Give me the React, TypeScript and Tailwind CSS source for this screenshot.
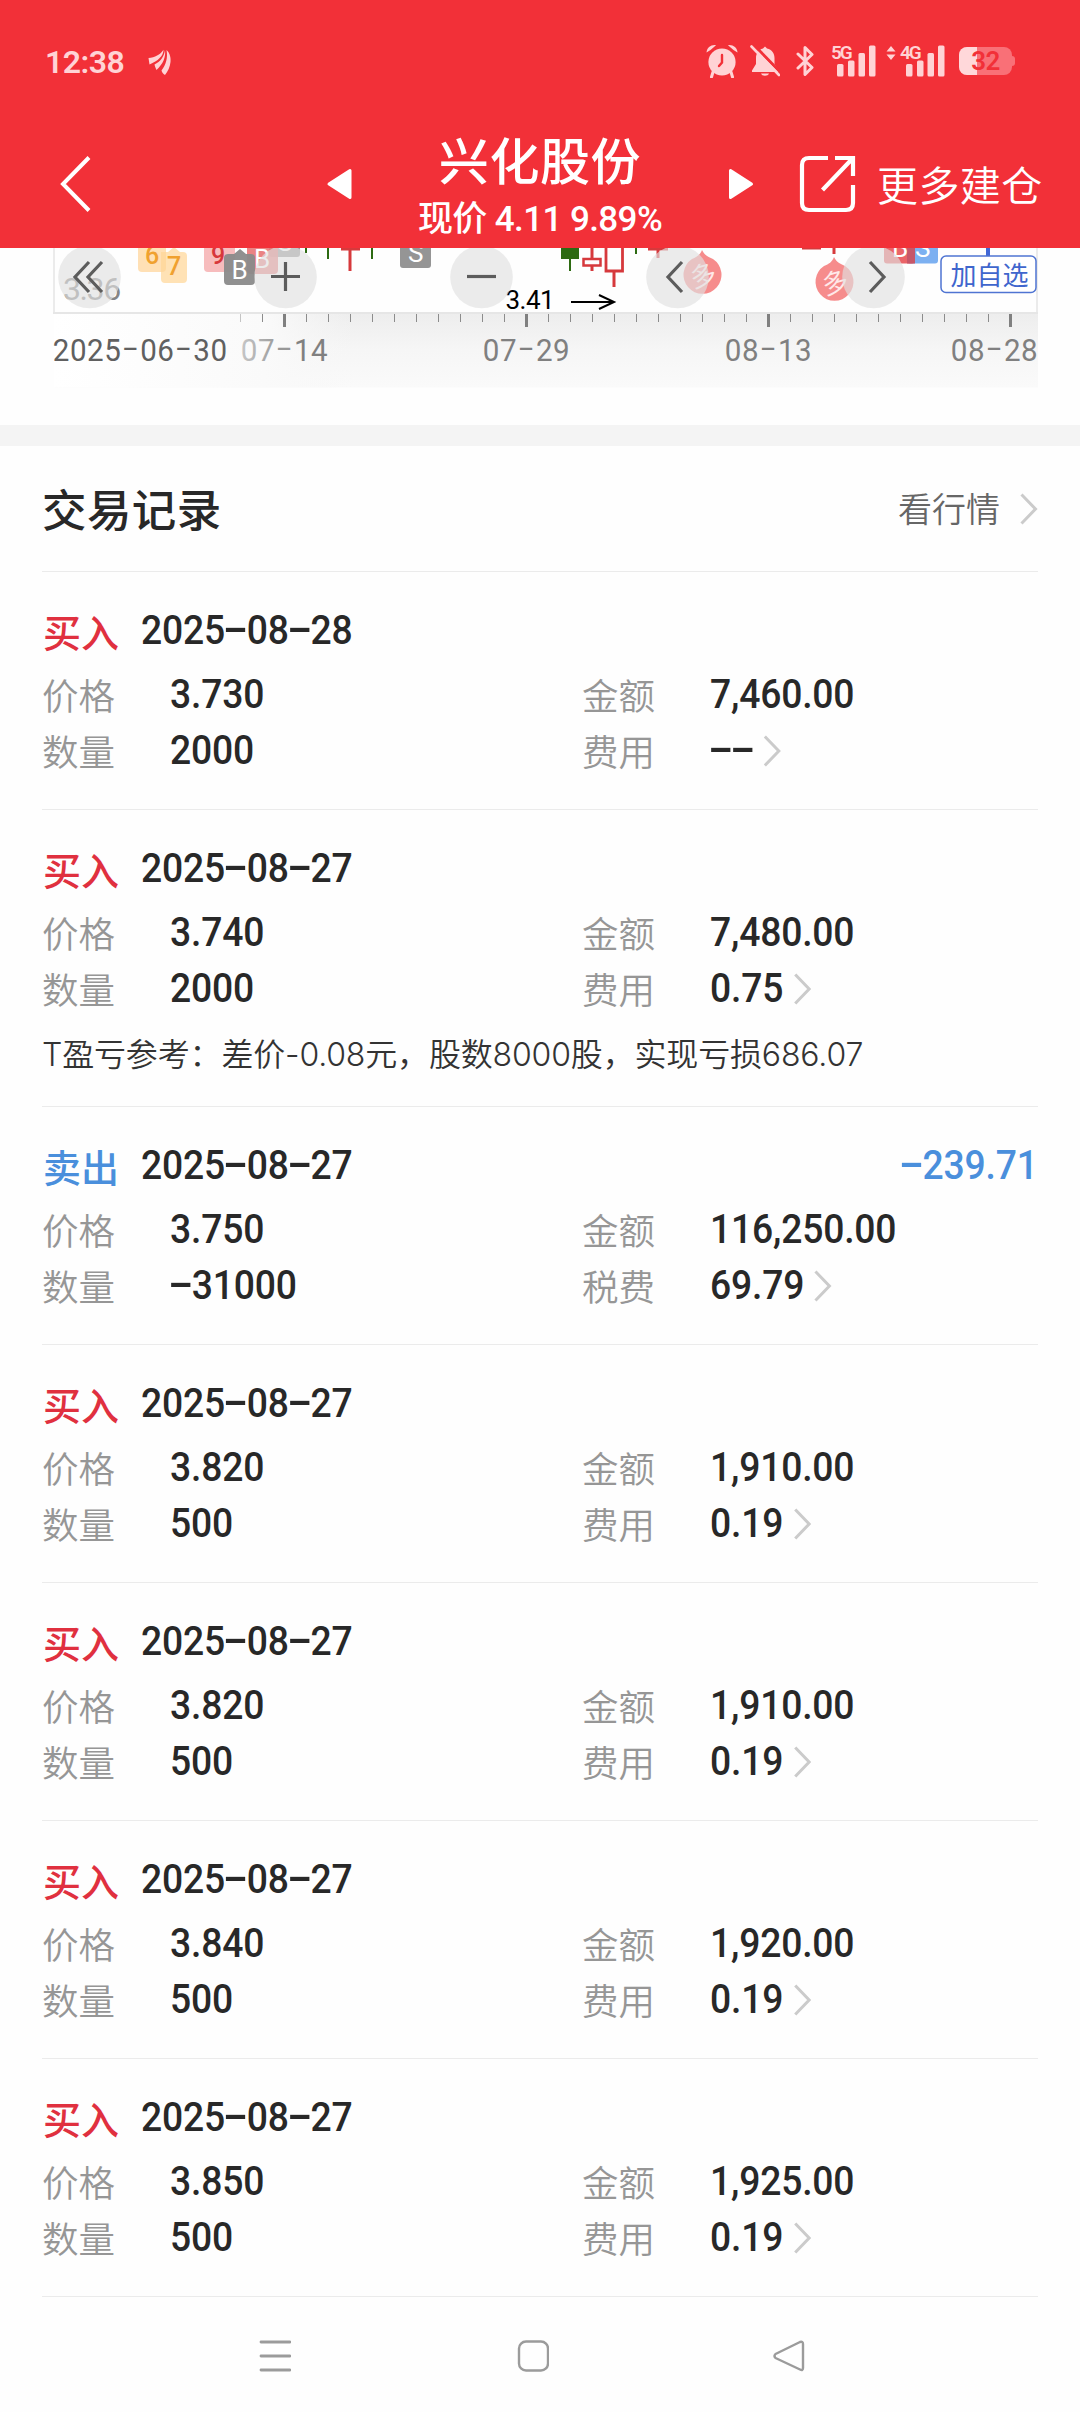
import { Fragment } from 'react';

interface Trade {
  side: 'buy' | 'sell';
  date: string;
  price: string;
  quantity: string;
  amount: string;
  fee: string;
  profit?: string;
  note?: string;
}

const trades: Trade[] = [
  { side: 'buy', date: '2025-08-28', price: '3.730', quantity: '2000', amount: '7,460.00', fee: '--' },
  {
    side: 'buy',
    date: '2025-08-27',
    price: '3.740',
    quantity: '2000',
    amount: '7,480.00',
    fee: '0.75',
    note: 'T盈亏参考：差价-0.08元，股数8000股，实现亏损686.07',
  },
  {
    side: 'sell',
    date: '2025-08-27',
    price: '3.750',
    quantity: '-31000',
    amount: '116,250.00',
    fee: '69.79',
    profit: '-239.71',
  },
  { side: 'buy', date: '2025-08-27', price: '3.820', quantity: '500', amount: '1,910.00', fee: '0.19' },
  { side: 'buy', date: '2025-08-27', price: '3.820', quantity: '500', amount: '1,910.00', fee: '0.19' },
  { side: 'buy', date: '2025-08-27', price: '3.840', quantity: '500', amount: '1,920.00', fee: '0.19' },
  { side: 'buy', date: '2025-08-27', price: '3.850', quantity: '500', amount: '1,925.00', fee: '0.19' },
];

function Chevron({ className }: { className?: string }) {
  return (
    <svg
      viewBox="0 0 18 32"
      preserveAspectRatio="none"
      className={`h-8 shrink-0 ${className ?? ''}`}
      fill="none"
      stroke="#cbcbcb"
      strokeWidth="3"
    >
      <path d="M1.5 1.5 15.5 16 1.5 30.5" />
    </svg>
  );
}

// Condensed digits with a wide, vertically centred dash
function Num({ value, more, right }: { value: string; more?: boolean; right?: boolean }) {
  return (
    <span
      className={`inline-flex scale-x-[0.92] items-center text-[40.5px] leading-[56px] font-medium tracking-[-0.2px] whitespace-nowrap ${right ? 'origin-right' : 'origin-left'}`}
    >
      <span>
        {value.split('').map((c, i) =>
          c === '-' ? (
            <span
              key={i}
              className="inline-block w-[23.6px] origin-center -translate-y-[2px] scale-x-[2] scale-y-[1.1] text-center tracking-normal"
            >
              -
            </span>
          ) : (
            <Fragment key={i}>{c}</Fragment>
          ),
        )}
      </span>
      {more && <Chevron className="mt-0.5 ml-[11px] w-[19.5px]" />}
    </span>
  );
}

function SignalBars() {
  return (
    <svg viewBox="0 0 40 32" className="h-8 w-10" fill="currentColor">
      <rect x="0" y="19" width="6.5" height="12.5" rx="1.5" />
      <rect x="11" y="15.5" width="6.5" height="16" rx="1.5" />
      <rect x="21.5" y="8" width="6.5" height="23.5" rx="1.5" />
      <rect x="32" y="0.5" width="6.5" height="31" rx="1.5" />
    </svg>
  );
}

function StatusBar() {
  return (
    <div className="flex h-[122px] items-center pr-[65px] pl-[45px] text-[#ffd3d5]">
      <span className="w-[103px] pt-px text-[32px] leading-8 font-semibold tracking-[-0.5px]">12:38</span>
      <svg viewBox="0 0 24 26" className="mt-0.5 h-[26px] w-6" fill="currentColor">
        <path d="M0.5 9C7 8.5 12 6 15.5 0.8C15.5 7 10 12 1.5 15.5Z" />
        <path d="M17 1C18 8 15 15 8.5 21C7.5 19 7 17.5 6.5 15.5C12.5 12.5 16 8 17 1Z" />
        <path d="M18.5 1C22 4 23 9 22.5 13C22 18 20 22 17 26C15.5 25.5 14 23.5 13.5 21.5C18 15.5 20 9 18.5 1Z" />
      </svg>

      <div className="ml-auto flex h-8 items-center">
        <svg viewBox="0 0 32 34" className="h-[34px] w-8" fill="currentColor">
          <circle cx="16" cy="18" r="13.6" />
          <path d="M0.5 8.5C1 3.5 5 0.5 10 1.2L4.5 6Z" />
          <path d="M31.5 8.5C31 3.5 27 0.5 22 1.2L27.5 6Z" />
          <path d="M7 28 5.5 33M25 28 26.5 33" stroke="currentColor" strokeWidth="3" strokeLinecap="round" />
          <path d="M16 11V18.5L13 22" fill="none" stroke="#f23038" strokeWidth="2.4" strokeLinecap="round" />
        </svg>
        <svg viewBox="0 0 30 32" className="ml-3 h-8 w-[30px]" fill="currentColor">
          <path d="M15 1.5 17 3.5C22 4.5 24.5 8.5 24.5 13V19L28.5 25.5V27H2V25.5L6 19V13C6 8.5 8.5 4.5 13 3.5Z" />
          <path d="M11 28.5H19C18 31.5 12 31.5 11 28.5Z" />
          <path d="M4 0 32 29" stroke="#f23038" strokeWidth="3" />
          <path d="M1.5 1.5 29 30" stroke="currentColor" strokeWidth="2.6" strokeLinecap="round" />
        </svg>
        <svg
          viewBox="0 0 18 32"
          className="ml-4 h-8 w-[18px]"
          fill="none"
          stroke="currentColor"
          strokeWidth="3"
          strokeLinejoin="round"
          strokeLinecap="round"
        >
          <path d="M2 9 16 22.5 9 29.5V2.5L16 9.5 2 23" />
        </svg>
        <div className="relative ml-[23px] flex">
          <span className="absolute -top-[2px] -left-[6px] text-[19px] leading-5 font-semibold tracking-[-2px]">5G</span>
          <SignalBars />
        </div>
        <svg viewBox="0 0 10 14" className="mb-4 ml-[9px] h-[14px] w-[10px]" fill="currentColor">
          <path d="M5 0 9.5 5.5H0.5ZM5 14 9.5 8.5H0.5Z" />
        </svg>
        <div className="relative ml-[10px] flex">
          <span className="absolute -top-[2px] -left-[6px] text-[19px] leading-5 font-semibold tracking-[-2px]">4G</span>
          <SignalBars />
        </div>
        <div className="relative ml-[13px] flex h-7 w-[53px] items-center justify-center overflow-hidden rounded-[8px] bg-[#f97077]">
          <span className="absolute inset-y-0 left-0 w-[18px] bg-[#ffd8da]" />
          <span className="relative text-[26px] leading-7 font-semibold tracking-[-0.5px] text-[#f23038]">32</span>
        </div>
        <span className="h-[10px] w-[3px] rounded-r bg-[#f97077]" />
      </div>
    </div>
  );
}

function TitleBar() {
  return (
    <div className="flex h-[126px] items-center text-white">
      <svg viewBox="0 0 32 56" className="mb-0.5 ml-[59px] h-14 w-8" fill="none" stroke="currentColor" strokeWidth="4">
        <path d="M30 1.5 4 28 30 54.5" />
      </svg>
      <svg
        viewBox="0 0 26 32"
        className="mb-0.5 ml-[235px] h-8 w-[26px]"
        fill="currentColor"
        stroke="currentColor"
        strokeWidth="3"
        strokeLinejoin="round"
      >
        <path d="M3 16 24 2.5V29.5Z" />
      </svg>
      <div className="flex w-[376px] flex-col items-center pt-2.5 whitespace-nowrap">
        <h1 className="text-[50px] leading-[60px] font-medium tracking-[0.6px]">兴化股份</h1>
        <p className="text-[35px] leading-[54px] font-medium tracking-[-0.6px]">现价 4.11 9.89%</p>
      </div>
      <svg
        viewBox="0 0 26 32"
        className="mb-0.5 h-8 w-[26px]"
        fill="currentColor"
        stroke="currentColor"
        strokeWidth="3"
        strokeLinejoin="round"
      >
        <path d="M23.5 16 2.5 2.5V29.5Z" />
      </svg>
      <svg viewBox="0 0 58 58" className="mb-0.5 ml-[45px] h-[58px] w-[58px]" fill="none" stroke="currentColor" strokeWidth="4.2">
        <path d="M29 3H10Q3 3 3 10V48Q3 55 10 55H47Q54 55 54 48V30" />
        <path d="M36 3H54V21M54 3 23.5 35" />
      </svg>
      <span className="ml-[20px] pt-1.5 text-[41px] font-[350] tracking-[0.4px]">更多建仓</span>
    </div>
  );
}

const ticks = Array.from({ length: 36 }, (_, i) => 240.5 + i * 22);
const majorTicks = [284.5, 526.5, 768.5, 1010.5];

const axisLabels = [
  { x: 54, text: '2025-06-30', fill: '#606060', dash: '#606060' },
  { x: 242, text: '07-14', fill: 'url(#labelFade)', dash: '#979797' },
  { x: 484, text: '07-29', fill: '#808080', dash: '#808080' },
  { x: 726, text: '08-13', fill: '#808080', dash: '#808080' },
  { x: 952, text: '08-28', fill: '#808080', dash: '#808080' },
];

interface AxisLabelProps {
  x: number;
  text: string;
  fill: string;
  dash: string;
}

function AxisLabel({ x, text, fill, dash }: AxisLabelProps) {
  let cursor = x;
  return (
    <g>
      {text.split('').map((c, i) => {
        const at = cursor;
        cursor += c === '-' ? 18.8 : 17.15;
        return c === '-' ? (
          <text key={i} transform={`translate(${at + 0.6} 358) scale(1.65 1)`} fontSize="31" fill={dash}>
            -
          </text>
        ) : (
          <text key={i} x={at - 1.2} y="361" fontSize="32" textLength="16.6" lengthAdjust="spacingAndGlyphs" fill={fill}>
            {c}
          </text>
        );
      })}
    </g>
  );
}

function RoundButton({ cx, d }: { cx: number; d: string }) {
  return (
    <g>
      <circle cx={cx} cy="277" r="31.3" fill="#e1e1e1" fillOpacity="0.65" />
      <path d={d} fill="none" stroke="#5c5c5c" strokeWidth="3.2" />
    </g>
  );
}

function DropMark({ x, y }: { x: number; y: number }) {
  return (
    <g transform={`translate(${x} ${y})`}>
      <path d="M-1-25C2-19 6-18 10-16A19 19 0 1 1-11-16C-6-18-3-20-1-25Z" fill="#f68c8c" />
      <text x="-13" y="10" fontSize="26" fill="#ffe9e9" transform="rotate(-16)">
        多
      </text>
    </g>
  );
}

function Chart() {
  return (
    <svg viewBox="0 248 1080 177" className="block h-[177px] w-[1080px]">
      <defs>
        <linearGradient id="axisShade" x1="0" y1="0" x2="0" y2="1">
          <stop offset="0" stopColor="#ededed" />
          <stop offset="0.5" stopColor="#f6f6f6" />
          <stop offset="1" stopColor="#fafafa" />
        </linearGradient>
        <linearGradient id="axisFade" x1="0" y1="0" x2="1" y2="0">
          <stop offset="0" stopColor="#ffffff" />
          <stop offset="0.7" stopColor="#fafafa" />
          <stop offset="1" stopColor="#f7f7f7" stopOpacity="0" />
        </linearGradient>
        <linearGradient id="labelFade" gradientUnits="userSpaceOnUse" x1="241" y1="0" x2="300" y2="0">
          <stop offset="0" stopColor="#c6c6c6" />
          <stop offset="1" stopColor="#808080" />
        </linearGradient>
      </defs>

      {/* date axis */}
      <rect x="54" y="313" width="984" height="74.5" fill="url(#axisShade)" />
      <rect x="54" y="313" width="300" height="74.5" fill="url(#axisFade)" />
      <path d="M54 248V313M1037 248V313" stroke="#ebebeb" strokeWidth="2" />
      <path d="M53 313H1038" stroke="#e6e6e6" strokeWidth="2" />
      {ticks.map((x) => (
        <path key={x} d={`M${x} 314V322`} stroke={x < 250 ? '#c4c4c4' : '#8c8c8c'} />
      ))}
      {majorTicks.map((x) => (
        <path key={x} d={`M${x} 314V327`} stroke="#808080" strokeWidth="3" />
      ))}
      {axisLabels.map((l) => (
        <AxisLabel key={l.text} {...l} />
      ))}

      {/* candles */}
      <g fill="none" strokeWidth="2" stroke="#d6393c">
        <path d="M341 249H360M350 248V271M648 249H668M658 248V258M802 248H821M834 248V254" strokeWidth="3" />
        <rect x="583.5" y="259" width="17" height="6.5" strokeWidth="2.5" />
        <path d="M592 248V258M592 266V271M614 272V287" strokeWidth="3" />
        <path d="M606 247V271H622.5V247" strokeWidth="2.8" />
      </g>
      <path d="M306 248V253M328 248V259M372 248V259M570 248V271M636 248V254" stroke="#2d6a12" strokeWidth="2" />
      <rect x="561" y="246" width="18" height="13" fill="#2d6a12" />
      <path d="M988 248V256" stroke="#4167d6" strokeWidth="4" />

      {/* signal badges */}
      <rect x="138" y="240" width="28" height="32" rx="4" fill="#ffe0b5" />
      <text x="145" y="264" fontSize="25" fontWeight="500" fill="#f0a12f">6</text>
      <path
        d="M168 252 174 247 180 252H183Q187 252 187 256V279Q187 283 183 283H165Q161 283 161 279V252Z"
        fill="#ffd595"
        fillOpacity="0.7"
      />
      <text x="167" y="275" fontSize="25" fontWeight="500" fill="#f0a12f">7</text>
      <rect x="204" y="240" width="31" height="32" rx="4" fill="#f7bcbd" />
      <text x="211" y="264" fontSize="25" fontWeight="500" fill="#d7373b">9</text>
      <rect x="269" y="240" width="31" height="17" rx="3" fill="#8e8e8e" fillOpacity="0.9" />
      <text x="277" y="251" fontSize="26" fill="#ffffff">S</text>
      <rect x="247" y="240" width="31" height="34" rx="4" fill="#e87676" fillOpacity="0.9" />
      <text x="254" y="268" fontSize="26" fill="#ffffff">B</text>
      <path
        d="M234 254 240 249 246 254H251Q255 254 255 258V281Q255 285 251 285H228Q224 285 224 281V258Q224 254 228 254Z"
        fill="#8a8a8a"
        fillOpacity="0.95"
      />
      <text x="231.5" y="279" fontSize="26" fill="#ffffff">B</text>
      <rect x="400" y="240" width="31" height="28" rx="3" fill="#959595" />
      <text x="408" y="262" fontSize="26" fill="#ffffff">S</text>
      <rect x="907" y="240" width="31" height="23.5" rx="3" fill="#7cb0f1" />
      <rect x="884" y="240" width="31" height="23.5" rx="3" fill="#ea6468" />
      <rect x="907" y="240" width="8" height="23.5" fill="#c65769" />
      <text x="892" y="257" fontSize="26" fill="#ffffff">B</text>
      <text x="915" y="257" fontSize="26" fill="#ffffff">S</text>
      <DropMark x={703} y={275} />
      <DropMark x={835} y={282} />

      <text x="63" y="299.5" fontSize="32" letterSpacing="-1.4" fill="#858585">3.36</text>
      <text x="505.5" y="309" fontSize="26" letterSpacing="-0.5" fill="#000000">3.41</text>
      <path d="M571 302H614M599 295 614 302 599 309" fill="none" stroke="#000000" strokeWidth="2" />

      {/* pan and zoom controls */}
      <RoundButton cx={89.5} d="M89 262 75 277 89 292M102 262 88 277 102 292" />
      <RoundButton cx={285.5} d="M271 276.5H300M285.5 262V291" />
      <RoundButton cx={481.5} d="M467 276.5H496" />
      <RoundButton cx={677.5} d="M682 262 668 277 682 292" />
      <RoundButton cx={873.5} d="M870 262 884 277 870 292" />

      <rect x="941" y="256" width="95" height="36.5" rx="5" fill="#ffffff" stroke="#4f74d2" strokeWidth="1.5" />
      <text x="950.5" y="285" fontSize="26" fill="#3f66cd">加自选</text>
    </svg>
  );
}

function Field({ label, value, more }: { label: string; value: string; more?: boolean }) {
  return (
    <div className="flex h-14 items-center">
      <span className="w-[127.5px] pt-[8px] text-[36.5px] leading-[48px] font-[350] text-[#969696]">{label}</span>
      <Num value={value} more={more} />
    </div>
  );
}

function TradeRow({ trade }: { trade: Trade }) {
  const sell = trade.side === 'sell';
  return (
    <li className="border-b border-[#ebebeb] pt-[30px] pb-[31px]">
      <div className="flex h-[56px] items-center text-[#282828]">
        <span
          className={`w-[99px] pt-[8px] pl-px text-[38px] leading-[48px] font-medium ${sell ? 'text-[#4a8fdc]' : 'text-[#e0303f]'}`}
        >
          {sell ? '卖出' : '买入'}
        </span>
        <Num value={trade.date} />
        {trade.profit && (
          <span className="ml-auto text-[#4a8fdc]">
            <Num value={trade.profit} right />
          </span>
        )}
      </div>
      <div className="mt-2 grid grid-cols-[540px_1fr] text-[#282828]">
        <Field label="价格" value={trade.price} />
        <Field label="金额" value={trade.amount} />
        <Field label="数量" value={trade.quantity} />
        <Field label={sell ? '税费' : '费用'} value={trade.fee} more />
      </div>
      {trade.note && (
        <p className="mt-[11px] h-12 pt-[5px] font-[Inter,'Noto_Sans_CJK_SC',sans-serif] text-[32px] leading-[45px] font-[350] tracking-[-0.16px] whitespace-nowrap text-[#333333]">
          {trade.note}
        </p>
      )}
    </li>
  );
}

function SystemNav() {
  return (
    <nav className="flex h-[118px] items-center pl-[259px]">
      <svg viewBox="0 0 32 32" className="h-8 w-8" fill="none" stroke="#9b9b9b" strokeWidth="2.8" strokeLinecap="round">
        <path d="M2 2H31M2 16H31M2 30H31" />
      </svg>
      <svg viewBox="0 0 32 32" className="ml-[226px] h-8 w-8" fill="none" stroke="#9b9b9b" strokeWidth="2.4">
        <rect x="2" y="1.5" width="29" height="29" rx="7" />
      </svg>
      <svg viewBox="0 0 32 32" className="ml-[224px] h-8 w-8" fill="none" stroke="#9b9b9b" strokeWidth="2.4" strokeLinejoin="round">
        <path d="M2.5 14 27 2Q30 1 30 4V28Q30 31 27 29.5L2.5 18Q0.5 16 2.5 14Z" />
      </svg>
    </nav>
  );
}

export default function App() {
  return (
    <div className="h-[2412px] w-[1080px] overflow-hidden bg-[#fefefe] font-[Roboto,'Noto_Sans_CJK_SC',sans-serif]">
      <header className="h-[248px] bg-[#f23038]">
        <StatusBar />
        <TitleBar />
      </header>
      <Chart />
      <div className="h-[21px] bg-[#f4f4f4]" />

      <section className="px-[42px]">
        <div className="flex h-[126px] items-center justify-between border-b border-[#ebebeb]">
          <h2 className="pt-2 text-[44.5px] font-medium tracking-[0.4px] text-[#282828]">交易记录</h2>
          <div className="flex items-center text-[34px] text-[#666666]">
            <span className="pt-1 font-[350]">看行情</span>
            <Chevron className="ml-[20px] w-[18px]" />
          </div>
        </div>
        <ul>
          {trades.map((t, i) => (
            <TradeRow key={i} trade={t} />
          ))}
        </ul>
      </section>
      <SystemNav />
    </div>
  );
}
